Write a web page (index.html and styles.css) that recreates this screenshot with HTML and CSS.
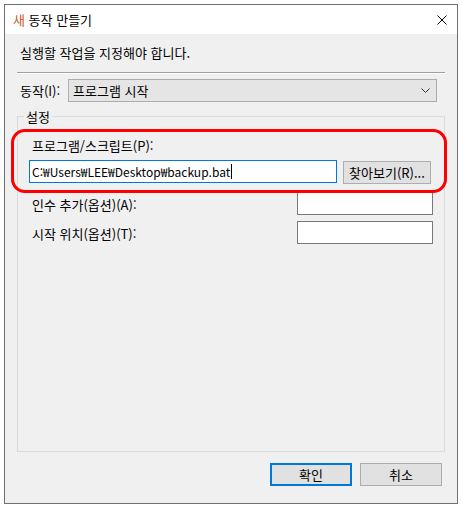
FILE: index.html
```html
<!DOCTYPE html>
<html lang="ko">
<head>
<meta charset="utf-8">
<title>새 동작 만들기</title>
<link rel="stylesheet" href="styles.css">
</head>
<body>
<div class="window">
  <div class="titlebar">
    <span class="title"><span class="title-first">새</span> 동작 만들기</span>
    <svg class="close" width="10" height="10" viewBox="0 0 10 10"><path d="M0.5 0.5L9.5 9.5M9.5 0.5L0.5 9.5" stroke="#000" stroke-width="1" fill="none"/></svg>
  </div>
  <div class="content">
    <div class="instruction">실행할 작업을 지정해야 합니다.</div>
    <div class="separator"></div>
    <div class="action-row">
      <span class="action-label">동작(I):</span>
      <div class="select">
        <span>프로그램 시작</span>
        <svg class="chevron" width="9" height="5" viewBox="0 0 9 5"><path d="M0.5 0.5L4.5 4.5L8.5 0.5" stroke="#333" stroke-width="1" fill="none"/></svg>
      </div>
    </div>
    <div class="group">
      <span class="legend">설정</span>
      <div class="field-label">프로그램/스크립트(P):</div>
      <div class="program-row">
        <div class="textbox focused"><span class="path">C:₩Users₩LEE₩Desktop₩backup.bat</span><span class="caret"></span></div>
        <div class="button browse">찾아보기(R)...</div>
      </div>
      <div class="option-row first">
        <span class="option-label">인수 추가(옵션)(A):</span>
        <div class="textbox small"></div>
      </div>
      <div class="option-row">
        <span class="option-label">시작 위치(옵션)(T):</span>
        <div class="textbox small"></div>
      </div>
    </div>
    <div class="footer">
      <div class="button default">확인</div>
      <div class="button">취소</div>
    </div>
  </div>
</div>
<div class="highlight"></div>
</body>
</html>
```
FILE: styles.css
```css
html, body {
  margin: 0;
  padding: 0;
  background: #ffffff;
}
body {
  font-family: "Noto Sans CJK KR", "Liberation Sans", sans-serif;
  font-size: 13px;
  color: #000;
  width: 462px;
  height: 511px;
  overflow: hidden;
  position: relative;
}
.window {
  margin: 4px 0 0 4px;
  width: 452px;
  height: 498px;
  border: 1px solid #707070;
  display: flex;
  flex-direction: column;
}
.titlebar {
  height: 29px;
  background: #fff;
  display: flex;
  align-items: center;
  justify-content: space-between;
  padding: 0 10px 0 8px;
  flex-shrink: 0;
}
.title {
  line-height: 16px;
}
.title-first {
  color: #c8561e;
}
.close {
  display: block;
}
.content {
  flex: 1;
  background: #f0f0f0;
  padding: 0 12px;
  display: flex;
  flex-direction: column;
}
.instruction {
  margin-top: 11px;
  line-height: 16px;
  padding-left: 3px;
}
.separator {
  margin-top: 11px;
  height: 1px;
  border-top: 1px solid #a0a0a0;
  background: #ffffff;
}
.action-row {
  margin-top: 5px;
  display: flex;
  align-items: center;
  padding-left: 3px;
}
.action-label {
  width: 48px;
  line-height: 16px;
}
.select {
  height: 21px;
  border: 1px solid #adadad;
  background: #e5e5e5;
  display: flex;
  align-items: center;
  justify-content: space-between;
  padding: 0 6px 0 4px;
  box-sizing: content-box;
  width: 357px;
}
.chevron {
  display: block;
}
.group {
  margin-top: 14px;
  height: 334px;
  border: 1px solid #dcdcdc;
  display: flex;
  flex-direction: column;
  padding-left: 11px;
}
.legend {
  align-self: flex-start;
  margin: -8px 0 0 -5px;
  padding: 0 2px;
  background: #f0f0f0;
  line-height: 16px;
}
.field-label {
  margin-top: 13px;
  padding-left: 3px;
  line-height: 16px;
}
.program-row {
  margin-top: 6px;
  display: flex;
  align-items: flex-start;
}
.textbox {
  background: #fff;
  border: 1px solid #7a7a7a;
  height: 21px;
  box-sizing: content-box;
  line-height: 21px;
  padding: 0 2px;
  white-space: nowrap;
}
.textbox.focused {
  width: 302px;
  border-color: #0078d7;
  display: flex;
  align-items: center;
}
.path {
  font-size: 12px;
}
.caret {
  display: inline-block;
  width: 1px;
  height: 15px;
  background: #000;
  margin-left: 1px;
}
.button {
  height: 21px;
  border: 1px solid #adadad;
  background: #e1e1e1;
  display: flex;
  align-items: center;
  justify-content: center;
  box-sizing: content-box;
  width: 80px;
}
.button.browse {
  margin-left: 6px;
  margin-top: 1px;
  width: 86px;
}
.option-row {
  margin-top: 6px;
  display: flex;
  align-items: center;
  justify-content: space-between;
  padding-left: 3px;
  padding-right: 11px;
}
.option-row.first {
  margin-top: 8px;
}
.option-label {
  line-height: 16px;
  margin-top: 3px;
}
.textbox.small {
  width: 130px;
}
.footer {
  margin-top: 11px;
  display: flex;
  justify-content: flex-end;
  gap: 8px;
  padding-right: 3px;
}
.button.default {
  border: 2px solid #0078d7;
  height: 19px;
  width: 78px;
}
.highlight {
  position: absolute;
  left: 11px;
  top: 129px;
  width: 430px;
  height: 58px;
  border: 3px solid #ff0000;
  border-radius: 14px;
  pointer-events: none;
}
```
